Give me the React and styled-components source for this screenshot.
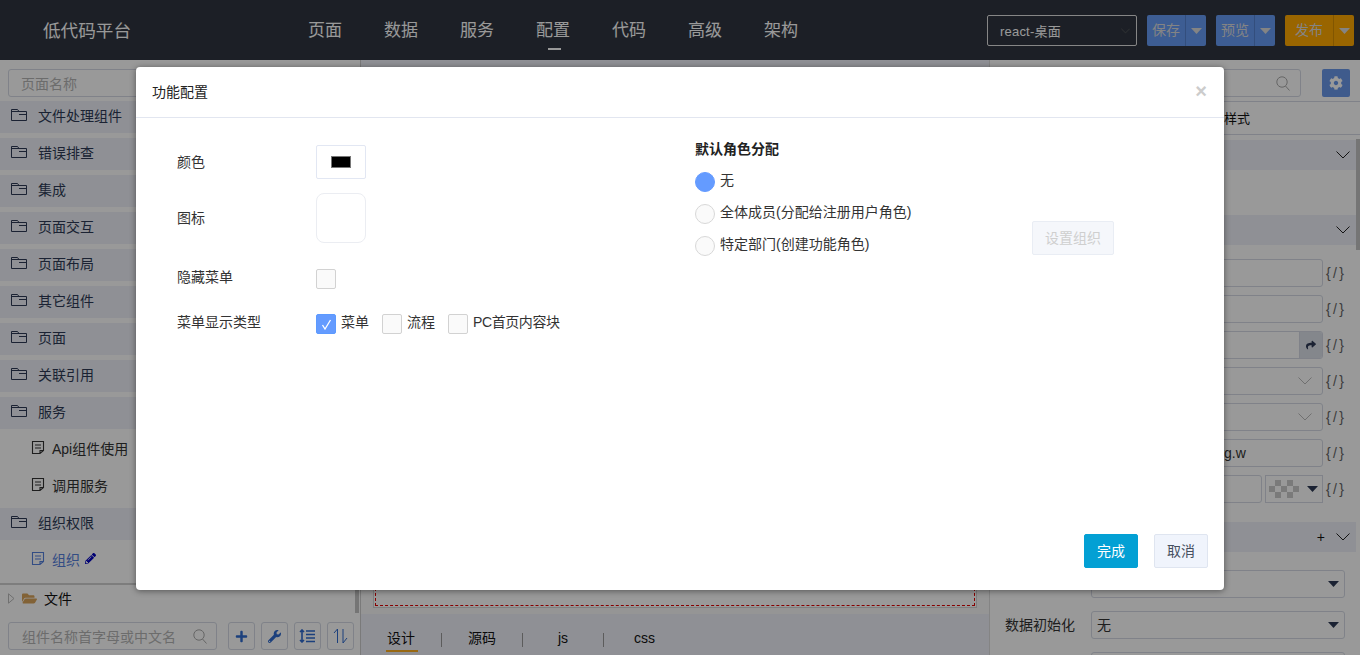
import React from 'react';
import styled, { createGlobalStyle } from 'styled-components';
import { FaCog, FaWrench, FaPlus, FaPencilAlt, FaFolderOpen, FaShare } from 'react-icons/fa';

const GlobalStyle = createGlobalStyle`
    html, body {
        margin: 0;
        padding: 0;
        height: 100%;
        overflow: hidden;
        background: #fff;
        font-family: "Liberation Sans", "Noto Sans CJK SC", sans-serif;
        font-size: 14px;
        color: #333;
    }
    * {
        box-sizing: border-box;
    }
`;

const FolderIcon = () => (
    <svg width="17" height="14" viewBox="0 0 17 14" fill="none" stroke="#2d3a55" strokeWidth="1">
        <path d="M0.5 12.5V1.5H6.5L8 3.5H15.5V12.5Z M0.5 3.5H8 M8 6.5H15.5" />
    </svg>
);

const FileIcon = ({ color = '#333' }) => (
    <svg width="14" height="15" viewBox="0 0 14 15" fill="none" stroke={color} strokeWidth="1.1">
        <path d="M1.5 1.5H12.5V10.5L9 13.5H1.5Z M4 5H10 M4 8H10 M9 13.5V10.5H12.5" />
    </svg>
);

const SearchIcon = () => (
    <svg width="14" height="15" viewBox="0 0 14 15" fill="none" stroke="#aaa" strokeWidth="1">
        <circle cx="6" cy="6" r="5.2" />
        <path d="M9.5 10L13.5 14.5" />
    </svg>
);

const Chevron = ({ color = '#222', size = 14 }) => (
    <svg width={size} height="8" viewBox="0 0 14 8" fill="none" stroke={color} strokeWidth="1">
        <path d="M0.5 0.5L7 7L13.5 0.5" />
    </svg>
);

const Caret = ({ color = '#2d3a55' }) => (
    <svg width="11" height="6" viewBox="0 0 11 6">
        <path d="M0 0H11L5.5 6Z" fill={color} />
    </svg>
);

const LinesIcon = () => (
    <svg width="17" height="14" viewBox="0 0 17 14" fill="none" stroke="#2f6bd0" strokeWidth="1.6">
        <path d="M3 1V13 M1 3L3 1L5 3 M1 11L3 13L5 11 M7 2H16 M7 5.5H16 M7 9H16 M7 12.5H16" />
    </svg>
);

const UpDownIcon = () => (
    <svg width="15" height="16" viewBox="0 0 15 16" fill="none" stroke="#2f6bd0" strokeWidth="1">
        <path d="M4.5 15V1L1 5 M10 1V15L14 10" />
    </svg>
);

const TreeArrow = () => (
    <svg width="7" height="11" viewBox="0 0 7 11" fill="none" stroke="#bbb" strokeWidth="1">
        <path d="M0.5 0.8L6 5.5L0.5 10.2Z" />
    </svg>
);

const Page = styled.div`
    position: relative;
    width: 100%;
    height: 100vh;
    display: flex;
    flex-direction: column;
    overflow: hidden;
`;

const Topbar = styled.header`
    flex: 0 0 60px;
    display: flex;
    align-items: flex-start;
    background: #2f3540;
    padding: 15px 6px 0 43px;
`;

const Logo = styled.div`
    width: 244px;
    height: 30px;
    line-height: 32px;
    font-size: 17.6px;
    color: #fff;
`;

const Nav = styled.nav`
    display: flex;
    flex: 1;
`;

const NavItem = styled.a`
    position: relative;
    width: 76px;
    padding-left: 21px;
    height: 30px;
    line-height: 32px;
    font-size: 17px;
    color: #fff;

    ${(p) => p.$active && `
        &::after {
            content: '';
            position: absolute;
            left: 33px;
            top: 33px;
            width: 13px;
            height: 2px;
            background: #fff;
        }
    `}
`;

const VersionSelect = styled.div`
    width: 150px;
    height: 31px;
    display: flex;
    align-items: center;
    justify-content: space-between;
    border: 1px solid #e0e0e0;
    border-radius: 2px;
    padding: 0 6px 0 12px;
    font-size: 13px;
    color: #fff;
    letter-spacing: 0.2px;
    margin-right: 10px;
`;

const SplitButton = styled.div`
    display: flex;
    height: 31px;
    margin-right: 10px;
    border-radius: 2px;
    overflow: hidden;
    background: ${(p) => p.$color};
    color: #fff;
    font-size: 14px;

    &:last-child {
        margin-right: 0;
    }
`;

const SplitLabel = styled.span`
    width: ${(p) => p.$width}px;
    display: flex;
    align-items: center;
    justify-content: center;
    padding-bottom: 3px;
    border-right: 1px solid rgba(0, 0, 0, 0.15);
    color: #ddd;
`;

const SplitArrow = styled.span`
    width: 20px;
    display: flex;
    align-items: center;
    justify-content: center;
`;

const Workspace = styled.div`
    flex: 1;
    display: flex;
    min-height: 0;
`;

const Sidebar = styled.aside`
    position: relative;
    flex: 0 0 361px;
    display: flex;
    flex-direction: column;
    border-right: 1px solid #ccc;
`;

const SearchRow = styled.div`
    flex: 0 0 auto;
    padding: 9px 8px 4px;
`;

const Field = styled.div`
    height: 28px;
    display: flex;
    align-items: center;
    justify-content: space-between;
    border: 1px solid #d5d9e4;
    border-radius: 3px;
    padding: 0 12px;
    font-size: 14px;
    color: #b5b5b5;
`;

const Tree = styled.div`
    flex: 0 0 484px;
    display: flex;
    flex-direction: column;
    gap: 5px;
    border-bottom: 2px solid #d0d0d0;
`;

const FolderRow = styled.div`
    flex: 0 0 32px;
    display: flex;
    align-items: center;
    gap: 10px;
    padding: 0 0 5px 11px;
    background: #eef0f8;
    color: #2d3a55;
    font-size: 14px;
`;

const FileRow = styled.div`
    flex: 0 0 32px;
    display: flex;
    align-items: center;
    gap: 7px;
    padding: 0 0 5px 31px;
    color: ${(p) => (p.$active ? '#5580dd' : '#333')};
    font-size: 14px;
`;

const EditIcon = styled(FaPencilAlt)`
    color: #0000c0;
    font-size: 11px;
    margin-left: -2px;
`;

const RootRow = styled.div`
    flex: 0 0 30px;
    display: flex;
    align-items: center;
    padding: 0 0 4px 8px;
    gap: 7px;
    font-size: 14px;
    color: #111;
`;

const OpenFolder = styled(FaFolderOpen)`
    color: #d9a35a;
    font-size: 15px;
`;

const BottomTools = styled.div`
    flex: 0 0 auto;
    display: flex;
    align-items: center;
    padding: 7px 0 0 8px;
    gap: 6px;
`;

const BottomSearch = styled(Field)`
    width: 209px;
    margin-right: 5px;
    padding: 0 9px 0 13px;
`;

const ToolButton = styled.button`
    width: 27px;
    height: 28px;
    padding: 0;
    display: flex;
    align-items: center;
    justify-content: center;
    background: #fff;
    border: 1px solid #d5d9e4;
    border-radius: 3px;
    color: #2f6bd0;
    font-size: 13px;
`;

const SideScroll = styled.div`
    position: absolute;
    right: 1px;
    top: 360px;
    bottom: 42px;
    width: 4px;
    background: #c4c4c4;
`;

const Center = styled.main`
    flex: 0 0 628px;
    display: flex;
    flex-direction: column;
    background: #f8f8f8;
`;

const CenterBar = styled.div`
    flex: 0 0 37px;
    background: #eef0f8;
`;

const CanvasArea = styled.div`
    flex: 1;
    padding: 12px 12px 6px;
    display: flex;
`;

const CanvasFrame = styled.div`
    flex: 1;
    border: 1px solid #d4d4d4;
    background: #fff;
    padding: 1px;
    display: flex;
`;

const CanvasDrop = styled.div`
    flex: 1;
    border: 1px dashed #e00000;
`;

const TabBar = styled.div`
    flex: 0 0 41px;
    display: flex;
    background: #eef0f8;
    padding-top: 19px;
`;

const TabItem = styled.div`
    position: relative;
    width: 81px;
    height: 14px;
    display: flex;
    align-items: flex-start;
    justify-content: center;
    line-height: 10px;
    font-size: 14px;
    color: #111;
    border-right: 1px solid #999;

    &:last-child {
        border-right: 0;
    }

    ${(p) => p.$active && `
        &::after {
            content: '';
            position: absolute;
            left: 25px;
            top: 17px;
            width: 32px;
            height: 2px;
            background: #ffb020;
        }
    `}
`;

const Inspector = styled.aside`
    position: relative;
    flex: 1;
    display: flex;
    flex-direction: column;
    border-left: 1px solid #ddd;
`;

const InspectorTop = styled.div`
    flex: 0 0 auto;
    display: flex;
    align-items: center;
    padding: 9px 10px 4px 12px;
    border-bottom: 1px solid #d5d9e4;
`;

const InspectorSearch = styled(Field)`
    flex: 1;
    margin-right: 21px;
    padding: 0 10px;
    justify-content: flex-end;
`;

const GearButton = styled.button`
    width: 28px;
    height: 28px;
    padding: 0;
    display: flex;
    align-items: center;
    justify-content: center;
    border: 0;
    border-radius: 2px;
    background: #6a98ea;
    color: #fff;
    font-size: 14px;
`;

const InspectorTabs = styled.div`
    flex: 0 0 33px;
    display: flex;
    align-items: center;
    justify-content: flex-end;
    padding: 0 110px 2px 0;
    gap: 30px;
    border-bottom: 1px solid #d5d9e4;
    font-size: 13px;
    color: #111;
`;

const Section = styled.div`
    flex: 0 0 30px;
    margin: ${(p) => p.$top}px 4px 0 0;
    display: flex;
    align-items: center;
    justify-content: flex-end;
    gap: 11px;
    padding-right: 6px;
    background: #eef0f8;
    font-size: 14px;
    color: #111;
`;

const SectionBody = styled.div`
    flex: 0 0 auto;
    display: flex;
    flex-direction: column;
    gap: 8px;
    padding-top: 14px;
`;

const FormRow = styled.div`
    flex: 0 0 28px;
    display: flex;
    align-items: center;
    height: 28px;
    padding-left: 15px;
`;

const FormLabel = styled.span`
    width: 86px;
    flex: 0 0 86px;
    padding-bottom: 2px;
    font-size: 14px;
    color: #333;
`;

const FormInput = styled.div`
    width: ${(p) => p.$width || 232}px;
    height: 28px;
    display: flex;
    align-items: center;
    justify-content: ${(p) => (p.$text ? 'flex-start' : 'flex-end')};
    border: 1px solid #d5d9e4;
    border-radius: 3px;
    padding: ${(p) => (p.$text ? '0 0 0 6px' : '0 10px')};
    font-size: 14px;
    color: #333;
    white-space: nowrap;
    overflow: hidden;
`;

const InputAddon = styled.span`
    width: 23px;
    height: 26px;
    margin-right: -10px;
    display: flex;
    align-items: center;
    justify-content: center;
    background: #dde1ea;
    border-left: 1px solid #d5d9e4;
    color: #2d3a55;
    font-size: 10px;
`;

const BindMark = styled.span`
    margin-left: 3px;
    font-size: 14px;
    letter-spacing: 2.4px;
    color: #666;
    white-space: pre;
`;

const ColorSelect = styled.div`
    width: 58px;
    height: 28px;
    margin-left: 3px;
    display: flex;
    align-items: center;
    justify-content: space-between;
    padding: 4px 4px 4px 3px;
    border: 1px solid #d5d9e4;
`;

const Checker = styled.span`
    width: 30px;
    height: 18px;
    background-color: #fff;
    background-image: conic-gradient(#ccc 25%, transparent 0 50%, #ccc 0 75%, transparent 0);
    background-size: 12px 12px;
`;

const LowerRows = styled.div`
    flex: 0 0 auto;
    display: flex;
    flex-direction: column;
    gap: 13px;
    padding-top: 18px;
`;

const WideSelect = styled(FormInput)`
    width: 254px;
    justify-content: space-between;
    padding: 0 5px 0 5px;
`;

const SelectText = styled.span`
    padding-bottom: 2px;
`;

const InspectorScroll = styled.div`
    position: absolute;
    right: 0;
    top: 79px;
    width: 4px;
    height: 111px;
    background: #c4c4c4;
`;

const Overlay = styled.div`
    position: absolute;
    inset: 0;
    background: rgba(0, 0, 0, 0.4);
`;

const Modal = styled.div`
    position: absolute;
    left: 136px;
    top: 67px;
    width: 1088px;
    height: 523px;
    display: flex;
    flex-direction: column;
    background: #fff;
    border-radius: 4px;
    box-shadow: 0 1px 6px rgba(0, 0, 0, 0.45);
`;

const ModalHead = styled.div`
    flex: 0 0 51px;
    display: flex;
    align-items: center;
    justify-content: space-between;
    padding: 0 17px 2px 16px;
    border-bottom: 1px solid #e2e6f0;
    font-size: 14px;
    color: #222;
`;

const CloseMark = styled.span`
    font-size: 20px;
    font-weight: bold;
    color: #ccc;
`;

const ModalBody = styled.div`
    flex: 1;
    display: flex;
    padding: 22px 0 0 41px;
`;

const LeftColumn = styled.div`
    width: 518px;
    display: grid;
    grid-template-columns: 139px 1fr;
    grid-template-rows: 48px 76px 45px 20px;
    align-content: start;
    align-items: start;
    padding-top: 5px;
`;

const RowLabel = styled.div`
    height: ${(p) => p.$height}px;
    display: flex;
    align-items: center;
    padding-bottom: ${(p) => p.$lift}px;
    font-size: 14px;
    color: #333;
`;

const ColorButton = styled.div`
    width: 50px;
    height: 34px;
    display: flex;
    align-items: center;
    justify-content: center;
    border: 1px solid #e2e7f3;
    border-radius: 2px;
`;

const Swatch = styled.span`
    width: 20px;
    height: 12px;
    background: #000;
    border: 1px solid #777;
`;

const IconBox = styled.div`
    width: 50px;
    height: 50px;
    border: 1px solid #ebedf2;
    border-radius: 8px;
`;

const CheckBox = styled.span`
    flex: 0 0 20px;
    width: 20px;
    height: 20px;
    display: flex;
    align-items: center;
    justify-content: center;
    border: 1px solid ${(p) => (p.$checked ? '#5c9aff' : '#d2d2d2')};
    border-radius: 2px;
    background: ${(p) => (p.$checked ? '#649bff' : '#fafafa')};
`;

const CheckGroup = styled.div`
    height: 20px;
    display: flex;
    align-items: center;
    gap: 5px;
    font-size: 14px;
    color: #333;
`;

const CheckText = styled.span`
    line-height: 14px;
    margin: 0 8px 5px 0;
    letter-spacing: ${(p) => (p.$tight ? '-0.4px' : '0')};
`;

const RightColumn = styled.div`
    position: relative;
    flex: 1;
`;

const RoleTitle = styled.div`
    font-size: 14px;
    font-weight: bold;
    color: #222;
    margin: -2px 0 14px;
`;

const RoleRow = styled.div`
    height: 20px;
    display: flex;
    align-items: center;
    gap: 5px;
    margin-bottom: 12px;
    font-size: 14px;
    color: #333;
`;

const Radio = styled.span`
    width: 20px;
    height: 20px;
    border-radius: 50%;
    border: 1px solid ${(p) => (p.$checked ? '#649bff' : '#d8d8d8')};
    background: ${(p) => (p.$checked ? '#649bff' : '#fafafa')};
`;

const RoleText = styled.span`
    line-height: 14px;
    margin-bottom: 5px;
`;

const OrgButton = styled.button`
    position: absolute;
    left: 337px;
    top: 81px;
    width: 82px;
    height: 34px;
    padding: 0 0 3px;
    background: #f5f7fb;
    border: 1px solid #e9edf4;
    border-radius: 2px;
    font: inherit;
    font-size: 14px;
    color: #cfcfcf;
`;

const ModalFoot = styled.div`
    flex: 0 0 56px;
    display: flex;
    gap: 16px;
    justify-content: flex-end;
    padding-right: 16px;
`;

const FootButton = styled.button`
    width: 54px;
    height: 34px;
    padding: 0 0 2px;
    border-radius: 2px;
    font: inherit;
    font-size: 14px;
    background: ${(p) => (p.$primary ? '#03a0d4' : '#f0f4fc')};
    border: 1px solid ${(p) => (p.$primary ? '#03a0d4' : '#dfe5f0')};
    color: ${(p) => (p.$primary ? '#fff' : '#46505f')};
`;

const navItems = ['页面', '数据', '服务', '配置', '代码', '高级', '架构'];
const folders = ['文件处理组件', '错误排查', '集成', '页面交互', '页面布局', '其它组件', '页面', '关联引用', '服务'];
const tabs = ['设计', '源码', 'js', 'css'];

const App = () => {
    return (
        <Page>
            <GlobalStyle />
            <Topbar>
                <Logo>低代码平台</Logo>
                <Nav>
                    {navItems.map((item) => (
                        <NavItem key={item} $active={item === '配置'}>{item}</NavItem>
                    ))}
                </Nav>
                <VersionSelect>
                    react-桌面
                    <Chevron color="#666" size={9} />
                </VersionSelect>
                <SplitButton $color="#669bf5">
                    <SplitLabel $width={39}>保存</SplitLabel>
                    <SplitArrow><Caret color="#ddd" /></SplitArrow>
                </SplitButton>
                <SplitButton $color="#669bf5">
                    <SplitLabel $width={39}>预览</SplitLabel>
                    <SplitArrow><Caret color="#ddd" /></SplitArrow>
                </SplitButton>
                <SplitButton $color="#ffa800">
                    <SplitLabel $width={49}>发布</SplitLabel>
                    <SplitArrow><Caret color="#ddd" /></SplitArrow>
                </SplitButton>
            </Topbar>

            <Workspace>
                <Sidebar>
                    <SearchRow>
                        <Field>页面名称</Field>
                    </SearchRow>
                    <Tree>
                        {folders.map((name) => (
                            <FolderRow key={name}><FolderIcon />{name}</FolderRow>
                        ))}
                        <FileRow><FileIcon />Api组件使用</FileRow>
                        <FileRow><FileIcon />调用服务</FileRow>
                        <FolderRow><FolderIcon />组织权限</FolderRow>
                        <FileRow $active><FileIcon color="#5580dd" />组织<EditIcon /></FileRow>
                    </Tree>
                    <RootRow>
                        <TreeArrow />
                        <OpenFolder />
                        文件
                    </RootRow>
                    <BottomTools>
                        <BottomSearch>组件名称首字母或中文名<SearchIcon /></BottomSearch>
                        <ToolButton><FaPlus /></ToolButton>
                        <ToolButton><FaWrench /></ToolButton>
                        <ToolButton><LinesIcon /></ToolButton>
                        <ToolButton><UpDownIcon /></ToolButton>
                    </BottomTools>
                    <SideScroll />
                </Sidebar>

                <Center>
                    <CenterBar />
                    <CanvasArea>
                        <CanvasFrame>
                            <CanvasDrop />
                        </CanvasFrame>
                    </CanvasArea>
                    <TabBar>
                        {tabs.map((tab) => (
                            <TabItem key={tab} $active={tab === '设计'}>{tab}</TabItem>
                        ))}
                    </TabBar>
                </Center>

                <Inspector>
                    <InspectorTop>
                        <InspectorSearch><SearchIcon /></InspectorSearch>
                        <GearButton><FaCog /></GearButton>
                    </InspectorTop>
                    <InspectorTabs>
                        <span>属性</span>
                        <span>样式</span>
                    </InspectorTabs>
                    <Section $top={5}><Chevron /></Section>
                    <Section $top={45}><Chevron /></Section>
                    <SectionBody>
                        <FormRow><FormLabel /><FormInput /><BindMark>{'{/}'}</BindMark></FormRow>
                        <FormRow><FormLabel /><FormInput /><BindMark>{'{/}'}</BindMark></FormRow>
                        <FormRow>
                            <FormLabel />
                            <FormInput><InputAddon><FaShare /></InputAddon></FormInput>
                            <BindMark>{'{/}'}</BindMark>
                        </FormRow>
                        <FormRow><FormLabel /><FormInput><Chevron color="#bbb" /></FormInput><BindMark>{'{/}'}</BindMark></FormRow>
                        <FormRow><FormLabel /><FormInput><Chevron color="#bbb" /></FormInput><BindMark>{'{/}'}</BindMark></FormRow>
                        <FormRow><FormLabel /><FormInput $text>https://www.baidu.org.w</FormInput><BindMark>{'{/}'}</BindMark></FormRow>
                        <FormRow>
                            <FormLabel />
                            <FormInput $width={171} />
                            <ColorSelect><Checker /><Caret /></ColorSelect>
                            <BindMark>{'{/}'}</BindMark>
                        </FormRow>
                    </SectionBody>
                    <Section $top={19}>+<Chevron /></Section>
                    <LowerRows>
                        <FormRow>
                            <FormLabel />
                            <WideSelect><span /><Caret /></WideSelect>
                        </FormRow>
                        <FormRow>
                            <FormLabel>数据初始化</FormLabel>
                            <WideSelect><SelectText>无</SelectText><Caret /></WideSelect>
                        </FormRow>
                        <FormRow>
                            <FormLabel />
                            <WideSelect />
                        </FormRow>
                    </LowerRows>
                    <InspectorScroll />
                </Inspector>
            </Workspace>

            <Overlay />
            <Modal>
                <ModalHead>
                    功能配置
                    <CloseMark>×</CloseMark>
                </ModalHead>
                <ModalBody>
                    <LeftColumn>
                        <RowLabel $height={34} $lift={3}>颜色</RowLabel>
                        <ColorButton><Swatch /></ColorButton>
                        <RowLabel $height={50} $lift={3}>图标</RowLabel>
                        <IconBox />
                        <RowLabel $height={20} $lift={6}>隐藏菜单</RowLabel>
                        <CheckBox />
                        <RowLabel $height={20} $lift={6}>菜单显示类型</RowLabel>
                        <CheckGroup>
                            <CheckBox $checked>
                                <svg width="11" height="11" viewBox="0 0 11 11" fill="none" stroke="#fff" strokeWidth="1.3">
                                    <path d="M1.5 6L4 10L9.5 1" />
                                </svg>
                            </CheckBox>
                            <CheckText>菜单</CheckText>
                            <CheckBox />
                            <CheckText>流程</CheckText>
                            <CheckBox />
                            <CheckText $tight>PC首页内容块</CheckText>
                        </CheckGroup>
                    </LeftColumn>
                    <RightColumn>
                        <RoleTitle>默认角色分配</RoleTitle>
                        <RoleRow><Radio $checked /><RoleText>无</RoleText></RoleRow>
                        <RoleRow><Radio /><RoleText>全体成员(分配给注册用户角色)</RoleText></RoleRow>
                        <RoleRow><Radio /><RoleText>特定部门(创建功能角色)</RoleText></RoleRow>
                        <OrgButton disabled>设置组织</OrgButton>
                    </RightColumn>
                </ModalBody>
                <ModalFoot>
                    <FootButton $primary>完成</FootButton>
                    <FootButton>取消</FootButton>
                </ModalFoot>
            </Modal>
        </Page>
    );
};

export default App;
